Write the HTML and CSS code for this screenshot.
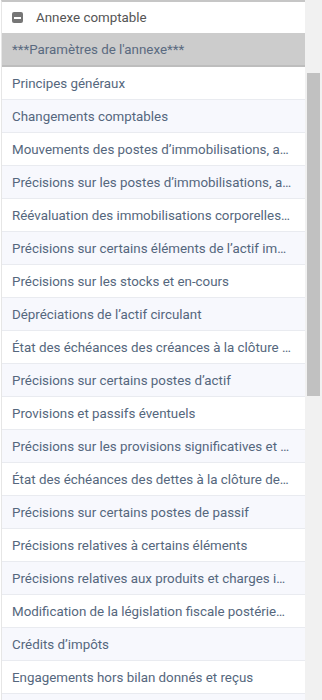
FILE: index.html
```html
<!DOCTYPE html>
<html lang="fr">
<head>
<meta charset="utf-8">
<title>Annexe comptable</title>
<link rel="stylesheet" href="styles.css">
</head>
<body>
<div class="frame">
  <div class="tree">
    <div class="head">
      <span class="toggle"><span class="bar"></span></span>
      <span class="head-label">Annexe comptable</span>
    </div>
    <ul class="items">
      <li class="item selected">***Paramètres de l'annexe***</li>
      <li class="item">Principes généraux</li>
      <li class="item alt">Changements comptables</li>
      <li class="item">Mouvements des postes d’immobilisations, amortissements et dépréciations</li>
      <li class="item alt">Précisions sur les postes d’immobilisations, amortissements</li>
      <li class="item">Réévaluation des immobilisations corporelles et financières</li>
      <li class="item alt">Précisions sur certains éléments de l’actif immobilisé</li>
      <li class="item">Précisions sur les stocks et en-cours</li>
      <li class="item alt">Dépréciations de l’actif circulant</li>
      <li class="item">État des échéances des créances à la clôture de l’exercice</li>
      <li class="item alt">Précisions sur certains postes d’actif</li>
      <li class="item">Provisions et passifs éventuels</li>
      <li class="item alt">Précisions sur les provisions significatives et passifs éventuels</li>
      <li class="item">État des échéances des dettes à la clôture de l’exercice</li>
      <li class="item alt">Précisions sur certains postes de passif</li>
      <li class="item">Précisions relatives à certains éléments</li>
      <li class="item alt">Précisions relatives aux produits et charges importants</li>
      <li class="item">Modification de la législation fiscale postérieure à la clôture</li>
      <li class="item alt">Crédits d’impôts</li>
      <li class="item">Engagements hors bilan donnés et reçus</li>
      <li class="item alt">Engagements de crédit-bail</li>
    </ul>
  </div>
  <div class="scrollbar"><div class="thumb"></div></div>
</div>
</body>
</html>
```
FILE: styles.css
```css
html, body {
  margin: 0;
  padding: 0;
  height: 700px;
  overflow: hidden;
  background: #ffffff;
}
.frame {
  display: flex;
  height: 700px;
  font-family: Roboto, "Liberation Sans", sans-serif;
  font-size: 13.35px;
}
.tree {
  width: 303px;
  margin-left: 1px;
  border-left: 1px solid #e6e6e6;
  border-top: 2px solid #c6c6c6;
  background: #ffffff;
  overflow: hidden;
}
.head {
  height: 31px;
  display: flex;
  align-items: center;
  padding-left: 10px;
  gap: 13px;
}
.toggle {
  width: 11px;
  height: 11px;
  border-radius: 2px;
  background: #767676;
  display: flex;
  align-items: center;
  justify-content: center;
}
.bar {
  width: 7px;
  height: 2px;
  background: #ffffff;
}
.head-label {
  color: #555555;
}
.items {
  list-style: none;
  margin: 0;
  padding: 0;
}
.item {
  height: 31px;
  line-height: 31px;
  padding: 1px 13px 0 10px;
  border-bottom: 1px solid #e9ebf0;
  color: #55677d;
  white-space: nowrap;
  overflow: hidden;
  text-overflow: ellipsis;
}
.item.alt {
  background: #f7f8fd;
}
.item.selected {
  background: #cccccc;
  border-bottom: 2px solid #bdbdbd;
  height: 31px;
  line-height: 31px;
  color: #5a6a80;
}
.scrollbar {
  width: 17px;
  background: #f1f1f1;
  padding: 73px 2px 0;
  box-sizing: border-box;
}
.thumb {
  height: 323px;
  background: #c1c1c1;
}
```
